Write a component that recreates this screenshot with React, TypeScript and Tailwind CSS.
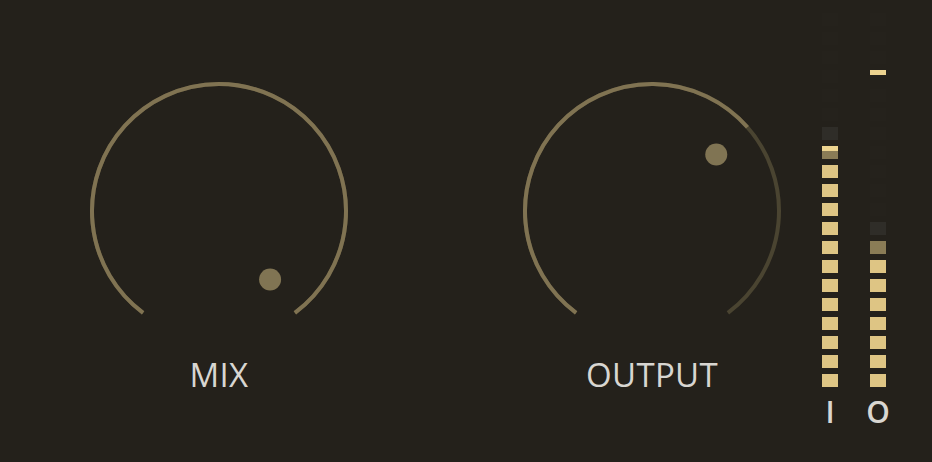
import React from "react"

const R = 127
const C = 133
const SWEEP = 143.3

const pt = (deg: number, r: number) => {
  const a = (deg * Math.PI) / 180
  return [C + r * Math.sin(a), C - r * Math.cos(a)]
}

const arc = (from: number, to: number) => {
  const [x1, y1] = pt(from, R)
  const [x2, y2] = pt(to, R)
  const large = to - from > 180 ? 1 : 0
  return `M ${x1.toFixed(2)} ${y1.toFixed(2)} A ${R} ${R} 0 ${large} 1 ${x2.toFixed(2)} ${y2.toFixed(2)}`
}

function Knob({ label, value }: { label: string; value: number }) {
  const angle = -SWEEP + value * SWEEP * 2
  const [dx, dy] = pt(angle, 85.5)
  return (
    <div className="flex w-[266px] flex-col items-center">
      <svg width={266} height={250} viewBox="0 0 266 250">
        <path d={arc(-SWEEP, SWEEP)} fill="none" stroke="#4a4431" strokeWidth={4} />
        <path d={arc(-SWEEP, angle)} fill="none" stroke="#807352" strokeWidth={4} />
        <circle cx={dx} cy={dy} r={11} fill="#807453" />
      </svg>
      <div className="mt-[30px] text-[33px] font-medium leading-[33px] tracking-[0.3px] text-[#d8d6d1]">{label}</div>
    </div>
  )
}

type Seg = "on" | "dim" | "dark" | "peak" | "peakdim" | "off"

function Meter({ label, segs }: { label: string; segs: Seg[] }) {
  return (
    <div className="flex w-[16px] flex-col items-center">
      <div className="flex flex-col gap-[6px]">
        {segs.map((s, i) => (
          <div
            key={i}
            className={
              s === "on"
                ? "h-[13px] w-[16px] bg-[#dec584]"
                : s === "dim"
                  ? "h-[13px] w-[16px] bg-[#8a7c56]"
                  : s === "dark"
                    ? "h-[13px] w-[16px] bg-[#2f2d28]"
                    : s === "peakdim"
                      ? "flex h-[13px] w-[16px] flex-col bg-[#8a7c56]"
                      : s === "peak"
                        ? "flex h-[13px] w-[16px] flex-col"
                        : "h-[13px] w-[16px] bg-[#25221c]"
            }
          >
            {(s === "peak" || s === "peakdim") && <div className="h-[5px] w-[16px] bg-[#ecd38f]" />}
          </div>
        ))}
      </div>
      <div className="mt-[10px] whitespace-nowrap text-[30px] font-semibold leading-[30px] text-[#d8d6d1]">{label}</div>
    </div>
  )
}

const build = (lit: number, extra: Record<number, Seg>): Seg[] =>
  Array.from({ length: 20 }, (_, i) => {
    const idx = 19 - i
    if (extra[idx]) return extra[idx]
    return idx < lit ? "on" : "off"
  })

export default function App() {
  const input = build(12, { 12: "peakdim", 13: "dark" })
  const output = build(7, { 7: "dim", 8: "dark", 16: "peak" })

  return (
    <div
      className="flex h-[462px] w-[932px] overflow-hidden bg-[#24211b]"
      style={{ fontFamily: '"Open Sans", "Noto Sans", sans-serif' }}
    >
      <div className="flex pl-[86px] pt-[78px]">
        <Knob label="MIX" value={1} />
        <div className="w-[167px]" />
        <Knob label="OUTPUT" value={0.67} />
      </div>
      <div className="ml-[37px] flex gap-[32px] pt-[13px]">
        <Meter label="I" segs={input} />
        <Meter label="O" segs={output} />
      </div>
    </div>
  )
}
